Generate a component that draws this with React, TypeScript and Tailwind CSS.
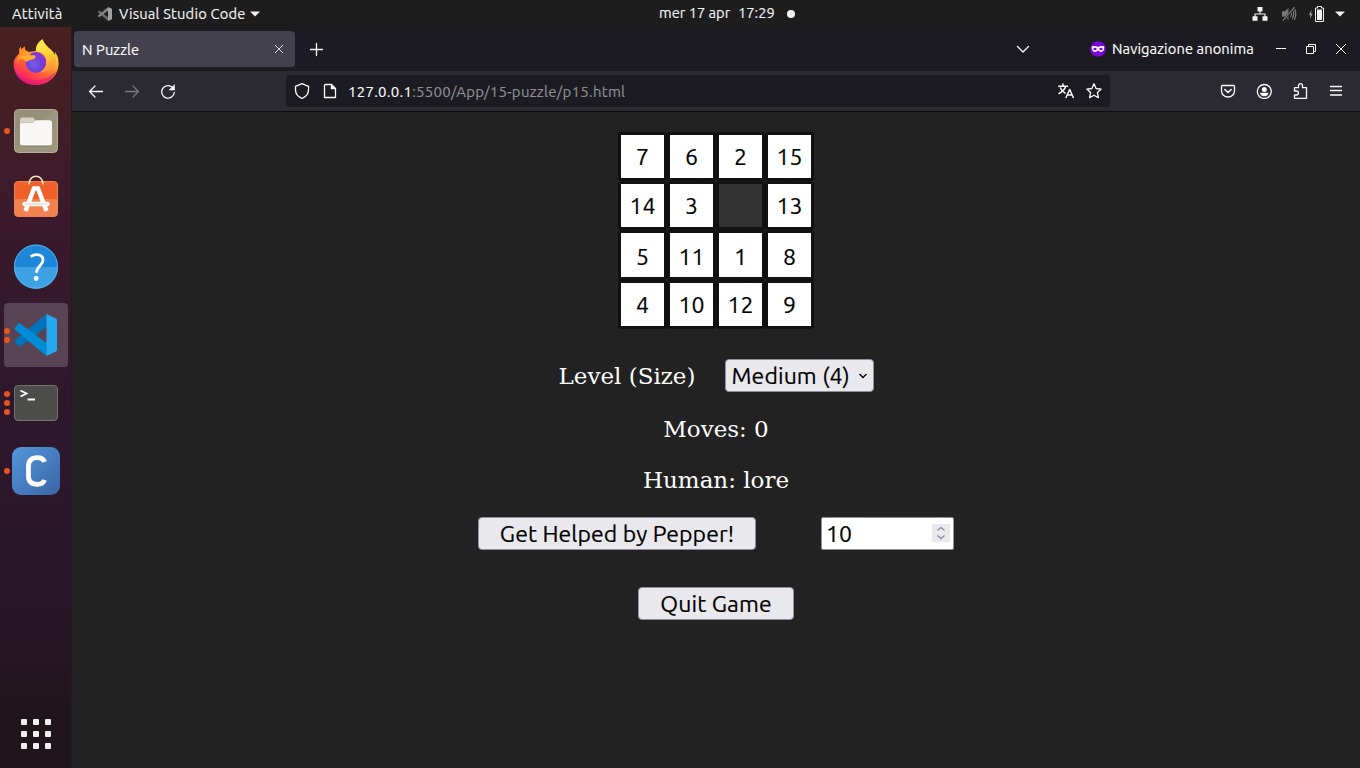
import React from "react";

const tiles: (number | null)[][] = [
  [7, 6, 2, 15],
  [14, 3, null, 13],
  [5, 11, 1, 8],
  [4, 10, 12, 9],
];

const line = {
  fill: "none",
  stroke: "currentColor",
  strokeWidth: 1.3,
  strokeLinecap: "round" as const,
  strokeLinejoin: "round" as const,
};

function Icon({ children, size = 16, className = "" }: { children: React.ReactNode; size?: number; className?: string }) {
  return (
    <svg width={size} height={size} viewBox="0 0 16 16" className={"shrink-0 " + className} {...line}>
      {children}
    </svg>
  );
}

function TopBar() {
  return (
    <header className="relative flex h-[27px] shrink-0 items-center bg-[#1d1d1d] text-[14.67px] text-[#f2f2f2] [-webkit-text-stroke:0.15px]">
      <span className="w-[85px] pl-3 tracking-[0.25px]">Attività</span>
      <svg width="14" height="14" viewBox="0 0 14 14" className="ml-[13px] shrink-0">
        <path d="M0 4.6 1.2 3.6 10.2 10.6V14L0.2 5.6Z" fill="#6c6c6c" />
        <path d="M0 9.2 1.2 10.3 10.2 3.6V0L0.2 8.3Z" fill="#858585" />
        <path d="M10 0 14 1.7V12.3L10 14Z" fill="#a0a0a0" />
      </svg>
      <span className="ml-[7px] w-[126px] whitespace-nowrap tracking-[0.2px]">Visual Studio Code</span>
      <svg width="10" height="6" viewBox="0 0 10 6" className="ml-[5px]">
        <path d="M0 0.5H10L5 5.5Z" fill="#f2f2f2" />
      </svg>
      <div className="ml-[399px] flex items-center whitespace-nowrap">
        <span className="w-[79px] pb-px">mer 17 apr</span>
        <span className="w-[49px] pb-px">17:29</span>
        <span className="size-2 rounded-full bg-[#f2f2f2]" />
      </div>
      <div className="ml-auto flex items-center pr-[15px]">
        <svg width="16" height="14" viewBox="0 0 16 14" className="-mr-[2px] ml-[2px]">
          <path d="M5.5 0h5v4.5h-5zM0.5 9.2h5v4.5h-5zM10.500 9.2h5v4.500h-5z" fill="#f2f2f2" />
          <path d="M8 4v3M3 10V7h10v3" fill="none" stroke="#f2f2f2" strokeWidth="1.1" />
        </svg>
        <svg width="16" height="16" viewBox="0 0 16 16" className="ml-[15px] -mr-px" fill="none" stroke="#777" strokeWidth="1.3">
          <path d="M1 5.2h3L7.5 2v12L4 10.8H1Z" fill="#777" stroke="none" />
          <path d="M9.5 5.2q2 2.8 0 5.6M11.3 3.4q3 4.6 0 9.2M13.3 2.3q3 5.7 0 11.4" />
          <path d="M14 1 2 15" stroke="#1d1d1d" strokeWidth="2.5" />
          <path d="M13.6 1.2 2 14.7" />
        </svg>
        <svg width="16" height="16" viewBox="0 0 16 16" className="ml-[12px]">
          <path d="M3.5 4 1 8.8h1.5L2 13l2.5-5.2H3Z" fill="#aaa" />
          <path d="M9.500 0.5h4V2h2v13.5h-8V2h2Z" fill="none" stroke="#f2f2f2" />
          <path d="M9 3.500h5v10.500H9z" fill="#f2f2f2" />
        </svg>
        <svg width="10" height="6" viewBox="0 0 10 6" className="ml-[11px]">
          <path d="M0 0.5H10L5 5.5Z" fill="#f2f2f2" />
        </svg>
      </div>
    </header>
  );
}

function DockItem({ dots = 0, active = false, children }: { dots?: number; active?: boolean; children: React.ReactNode }) {
  return (
    <div className={"relative flex h-16 w-16 shrink-0 items-center justify-center rounded " + (active ? "bg-[#584454]" : "")}>
      <div className="absolute left-0 flex h-full flex-col items-center justify-center gap-[3px]">
        {Array.from({ length: dots }, (_, i) => (
          <span key={i} className="size-[6px] rounded-full bg-[#e95420]" />
        ))}
      </div>
      {children}
    </div>
  );
}

function Firefox() {
  return (
    <svg width="48" height="48" viewBox="0 1 48 48">
      <defs>
        <linearGradient id="ffBody" x1="0.85" y1="0.1" x2="0.3" y2="1">
          <stop offset="0" stopColor="#fff14a" />
          <stop offset="0.3" stopColor="#ffb82e" />
          <stop offset="0.58" stopColor="#ff6b35" />
          <stop offset="0.82" stopColor="#ff3850" />
          <stop offset="1" stopColor="#e31587" />
        </linearGradient>
        <radialGradient id="ffGlobe" cx="0.4" cy="0.6" r="0.7">
          <stop offset="0" stopColor="#7a5cf0" />
          <stop offset="0.5" stopColor="#6b42d4" />
          <stop offset="1" stopColor="#a52ad2" />
        </radialGradient>
        <linearGradient id="ffHead" x1="0" y1="0" x2="1" y2="0.4">
          <stop offset="0" stopColor="#ff7a22" />
          <stop offset="1" stopColor="#ffb52b" />
        </linearGradient>
        <linearGradient id="ffTail" x1="0" y1="0" x2="0.3" y2="1">
          <stop offset="0" stopColor="#fff44f" />
          <stop offset="0.55" stopColor="#ffd43a" />
          <stop offset="1" stopColor="#ff9833" />
        </linearGradient>
      </defs>
      <path d="M8.7 8.5C7 11 7 13 7.6 15 3.5 18.5 1.6 22 1.6 26 1.8 38 11 47 24 47s22.6-9.5 22.6-22c0-5-1.8-9-4-11.5.5 2 .6 3 .5 4C41 11 33 9 30.5 1.2 26 4 23.5 8.5 24 13l-7 1-4-2V8.5c-1.6.8-2.6 2-3.5 3.5Z" fill="url(#ffBody)" />
      <circle cx="24" cy="24.500" r="10.400" fill="url(#ffGlobe)" />
      <path d="M30.5 1.2c-4.7 3-7 7.6-6.400 11.9 6.200-.2 11 4.400 10.300 11.300-.4 5-3.400 8.700-7 9.800 9 .4 15.600-3.600 16.600-12.400C43 12.5 33.2 10 30.5 1.2Z" fill="url(#ffTail)" />
      <path d="M8.7 8.5c-1.6 2.5-1.4 5-.9 7.1C5 19 4.6 22.2 5.2 25c2-4 5.3-5.6 8.6-4.8 2.7 2.4 6.9 1.7 9.6-.4.7-1.3-.3-2.2-1.5-2.5-3 .3-4.3-.6-5.9-2.5L13 12V8.5c-1.6.8-2.6 2-3.5 3.5Z" fill="url(#ffHead)" />
      <path d="M8 19c3-2 6-1.4 9-.3 2 .7 4 .4 5.7.5.5.8-.2 1.6-1.3 1.9-3 .8-5 1.4-7 3-2.7-3-5-4-8-2.8Z" fill="#ffad2e" />
      <path d="M3 32c4 7 11 10 20 10s16-3 21-9c-3 9-10 14-20 14S5.800 41 3 32Z" fill="#e41678" opacity="0.6" />
    </svg>
  );
}

function Files() {
  return (
    <svg width="48" height="48" viewBox="0 0 48 48">
      <rect x="2.5" y="2.500" width="43" height="43" rx="4" fill="#9d967e" stroke="#b5ae98" />
      <path d="M3 42 42 3H6Q3 3 3 6Z" fill="#8f8871" opacity="0.4" />
      <path d="M8 13q0-2.500 2.500-2.500H20q2 0 2.800 2l.8 1.800V30H8Z" fill="#d8d3c5" />
      <rect x="8.500" y="15" width="31" height="24.500" rx="2.500" fill="#6f6957" opacity="0.7" />
      <path d="M8 18q0-2.500 2.500-2.500H20q1.500 0 2.500-1.300 1-.9 2.500-.9h12.500q2.500 0 2.500 2.500V36q0 2.500-2.500 2.500h-27Q8 38.500 8 36Z" fill="#f8f7f5" />
    </svg>
  );
}

function Software() {
  return (
    <svg width="48" height="48" viewBox="0 0 48 48">
      <rect x="2.500" y="6.500" width="43" height="35" rx="3.500" fill="#f0602a" stroke="#ee8250" />
      <path d="M3 24h42v14q0 3-3 3H6q-3 0-3-3Z" fill="#f28350" />
      <path d="M17 9.500C17-1.500 31-1.500 31 9.500" fill="none" stroke="#ffe3bd" strokeWidth="1.600" />
      <g stroke="#fff" fill="none">
        <path d="m13.500 36 8.500-22.500h4l8.500 22.500" strokeWidth="4.500" />
        <path d="M12.500 29h23" strokeWidth="4.500" strokeLinecap="round" />
        <path d="M13 29h22" stroke="#f7ad89" strokeWidth="0.700" />
      </g>
    </svg>
  );
}

function Help() {
  return (
    <svg width="48" height="48" viewBox="0 0.500 48 48">
      <circle cx="24" cy="24" r="22" fill="#1d86d8" />
      <path d="M2 24.500a22 22 0 0 0 44 0Z" fill="#3da1e3" />
      <circle cx="24" cy="24" r="21.500" fill="none" stroke="#65b7ed" strokeWidth="0.800" />
      <path d="M18.500 14.200c5.500-3.700 12.500-2.200 12.500 3.400 0 5.500-6.500 5.900-6.500 12.600" fill="none" stroke="#fff" strokeWidth="2.800" />
      <circle cx="24.200" cy="36" r="2.400" fill="#fff" />
    </svg>
  );
}

function VSCode() {
  return (
    <svg width="48" height="48" viewBox="0 0 48 48">
      <path d="M3 31.200q-1-.9 0-1.900L34.500 3v13L8 35.500q-.9.700-1.800-.1Z" fill="#0074ba" />
      <path d="M3 16.800q-1 .9 0 1.900L34.500 45V32L8 12.500q-.9-.7-1.800.1Z" fill="#008dd8" />
      <path d="M34.500 3 44 7.500q1 .5 1 1.700v29.600q0 1.200-1 1.700L34.500 45Z" fill="#25a9ef" />
    </svg>
  );
}

function Terminal() {
  return (
    <svg width="48" height="48" viewBox="0 0 48 48">
      <rect x="2.500" y="6.500" width="43" height="35" rx="3.500" fill="#4c4c4a" stroke="#70706d" />
      <path d="m8.500 11.500 6 3-6 3M15.500 20.500h7.500" fill="none" stroke="#fff" strokeWidth="1.800" />
    </svg>
  );
}

function CApp() {
  return (
    <svg width="48" height="48" viewBox="0 0 48 48">
      <defs>
        <linearGradient id="cBlue" x1="0" y1="0" x2="1" y2="1">
          <stop stopColor="#5197da" />
          <stop offset="1" stopColor="#3c64a6" />
        </linearGradient>
      </defs>
      <rect width="48" height="48" rx="9" fill="url(#cBlue)" />
      <path d="M32.500 15q-1.500-4.300-7-4.300-9 0-9 8.300v10q0 8.300 9 8.300 5.500 0 7-4.300" fill="none" stroke="#fff" strokeWidth="4.800" />
    </svg>
  );
}

function Dock() {
  return (
    <aside className="flex w-[72px] shrink-0 flex-col items-center gap-1 border-r border-[#2b1722] bg-[linear-gradient(#48201f_0%,#3b1a2c_25%,#2d172c_55%,#291628_78%,#21151c_92%,#21151c_100%)] pt-1 pb-[2px]">
      <DockItem><Firefox /></DockItem>
      <DockItem dots={1}><Files /></DockItem>
      <DockItem><Software /></DockItem>
      <DockItem><Help /></DockItem>
      <DockItem dots={2} active><VSCode /></DockItem>
      <DockItem dots={3}><Terminal /></DockItem>
      <DockItem dots={1}><CApp /></DockItem>
      <div className="mt-auto flex size-16 items-center justify-center">
        <div className="grid grid-cols-3 gap-[6px]">
          {Array.from({ length: 9 }, (_, i) => (
            <span key={i} className="size-[6px] rounded-[1px] bg-[#f2f0ef]" />
          ))}
        </div>
      </div>
    </aside>
  );
}

function TabStrip() {
  return (
    <div className="flex h-11 shrink-0 items-center bg-[#1c1b22] pl-[2px] text-[14.67px] text-[#fbfbfe] [-webkit-text-stroke:0.15px]">
      <div className="flex h-9 w-[221px] items-center justify-between rounded bg-[#42414d] pr-[11px] pl-2">
        <span className="pt-px tracking-[0.1px]">N Puzzle</span>
        <Icon size={10}><path d="M2 2 14 14M14 2 2 14" /></Icon>
      </div>
      <Icon className="ml-[14px]"><path d="M7.500 2.500v12M1.500 8.500h12" /></Icon>
      <div className="ml-auto flex items-center">
        <Icon className="mr-[59px]"><path d="m2.500 5.500 5.500 5.500 5.500-5.500" /></Icon>
        <svg width="16" height="16" viewBox="0 0 16 16">
          <circle cx="8" cy="8" r="7.800" fill="#7b05d8" />
          <path d="M1.700 5.300q3.800-1 6.300.7 2.500-1.700 6.300-.7.300 5.300-3.300 5.700-1.700 0-3-1.700-1.300 1.700-3 1.700Q1.400 10.600 1.700 5.300Z" fill="#fff" />
          <ellipse cx="5" cy="8" rx="1.700" ry="1.200" fill="#7b05d8" />
          <ellipse cx="11" cy="8" rx="1.700" ry="1.200" fill="#7b05d8" />
        </svg>
        <span className="ml-[6px] w-[142px] whitespace-nowrap tracking-[0.1px]">Navigazione anonima</span>
        <svg width="10" height="10" viewBox="0 0 10 10" className="ml-[22px]" stroke="#fbfbfe"><path d="M0 4.500h10" /></svg>
        <svg width="10" height="10" viewBox="0 0 10 10" className="ml-[20px]" stroke="#fbfbfe" fill="none">
          <path d="M.5 2.500h7v7h-7zM2.500 2.500v-2h7v7h-2" />
        </svg>
        <svg width="10" height="10" viewBox="0 0 10 10" className="mr-[14px] ml-[20px]" stroke="#fbfbfe"><path d="m0 0 10 10M10 0 0 10" /></svg>
      </div>
    </div>
  );
}

function Toolbar() {
  return (
    <div className="flex h-[41px] shrink-0 items-center border-b border-[#0c0c0d] bg-[#2b2a33] text-[#fbfbfe]">
      <Icon className="ml-4"><path d="M14.500 8.500H1.500M7 3 1.500 8.500 7 14" /></Icon>
      <Icon className="ml-5 text-[#77767c]"><path d="M1.500 8.500h13M9 3 14.500 8.500 9 14" /></Icon>
      <Icon className="ml-5">
        <path d="M14.300 9.500A6.300 6.300 0 1 1 12.600 4.500" />
        <path d="M14.500 2V7H9.500Z" fill="currentColor" strokeWidth="0.600" />
      </Icon>
      <div className="ml-[110px] flex h-8 w-[824px] items-center rounded bg-[#1c1b22] px-2">
        <Icon><path d="M8 .7 14.500 3.300V7q0 5.500-6.500 8.500Q1.500 12.500 1.500 7V3.300Z" /></Icon>
        <Icon className="ml-3">
          <path d="M3.500 1.500H9.500L13.500 5.500V14.500H2.500V2.500Q2.500 1.500 3.500 1.500Z" />
          <path d="M9 1.500V6h4.500Z" fill="currentColor" strokeWidth="0.500" />
        </Icon>
        <span className="mt-[2px] ml-[10px] text-[15px] tracking-[0.26px] whitespace-nowrap text-[#8f8f94] [-webkit-text-stroke:0.15px]">
          <span className="text-[#fbfbfe]">127.0.0.1</span>:5500/App/15-puzzle/p15.html
        </span>
        <Icon className="ml-auto">
          <path d="M.7 3.200h8.800M5 1v2M7.700 3.500Q6 8 1 10.500M2.500 5q1.500 3.500 4.500 5M8 14.500 11.700 6.500 15.300 14.500M9.300 12h4.900" strokeWidth="1.500" />
        </Icon>
        <Icon className="ml-3">
          <path d="m8 .8 2.100 4.700 5.100.6-3.800 3.500 1 5.100L8 12.200l-4.400 2.500 1-5.100L.8 6.100l5.100-.6Z" />
        </Icon>
      </div>
      <div className="mr-4 ml-auto flex gap-5">
        <Icon>
          <path d="M2.500 2.500h11q1 0 1 1V8a6.500 6 0 0 1-13 0V3.500q0-1 1-1Z" />
          <path d="m4.800 6.500 3.200 3 3.200-3" strokeWidth="1.500" />
        </Icon>
        <Icon>
          <circle cx="8.300" cy="8.500" r="7" />
          <circle cx="8.300" cy="6.500" r="2.500" fill="currentColor" stroke="none" />
          <path d="M4 9.800h8.600q-.8 3.500-4.300 3.500T4 9.800Z" fill="currentColor" stroke="none" />
        </Icon>
        <Icon>
          <path d="M2.500 8V4.700H6.500V2.700q0-2 2-2t2 2v2h4v10.600H2.500V12h2q1.900 0 1.900-2T4.500 8Z" />
        </Icon>
        <Icon><path d="M2.500 3.500h11M2.500 7.500h11M2.500 12h11" /></Icon>
      </div>
    </div>
  );
}

function Board() {
  return (
    <div className="grid w-[196px] grid-cols-4 grid-rows-[49px_49px_50px_49px] text-[23px] [-webkit-text-stroke:0.2px]">
      {tiles.map((row, r) =>
        row.map((n, c) => (
          <div
            key={`${r}-${c}`}
            className={
              "flex items-center justify-center rounded-[3px] border-3 border-[#111] leading-none text-black " +
              (n === null ? "bg-[#333] " : "bg-white ") +
              (r === 2 ? "pt-[2px]" : "pb-px")
            }
          >
            {n}
          </div>
        ))
      )}
    </div>
  );
}

const control = "flex h-[33px] items-center whitespace-nowrap border border-[#8f8f9d] text-[23px] leading-none text-black [-webkit-text-stroke:0.2px]";

function Game() {
  return (
    <main className="flex flex-1 flex-col items-center bg-[#222] pt-5 text-white">
      <Board />
      <div className="mt-[30px] flex h-[33px] items-center">
        <span className="w-[166px] pt-px font-['DejaVu_Serif',serif] text-[23px] whitespace-nowrap">Level (Size)</span>
        <div className={control + " w-[149px] justify-between rounded-[4px] bg-[#e9e9ed] pr-[6px] pl-[6px] tracking-[0.1px]"}>
          <span>Medium (4)</span>
          <svg width="8" height="6" viewBox="0 0 8 6" fill="none" stroke="#000" strokeWidth="1.300"><path d="M.5 1 4 4.500 7.500 1" /></svg>
        </div>
      </div>
      <p className="mt-[23px] h-7 font-['DejaVu_Serif',serif] text-[23px] leading-7">Moves: 0</p>
      <p className="mt-[23px] h-7 font-['DejaVu_Serif',serif] text-[23px] leading-7">Human: lore</p>
      <div className="mt-[23px] flex gap-[65px]">
        <button className={control + " w-[278px] justify-center rounded-[4px] bg-[#e9e9ed] tracking-[0.1px]"}>Get Helped by Pepper!</button>
        <div className={control + " w-[133px] justify-between rounded-[2px] bg-white pr-[3px] pl-[4px]"}>
          <span>10</span>
          <svg width="18" height="18" viewBox="0 0 18 18" fill="none" stroke="#8f8f9d" strokeWidth="1.500" className="mb-px">
            <path d="M0 0h18v18H0z" fill="#e9e9ed" stroke="none" />
            <path d="m5.500 6.500 3.500-3 3.500 3M5.500 11.500l3.500 3 3.500-3" />
          </svg>
        </div>
      </div>
      <button className={control + " mt-[37px] w-[156px] justify-center rounded-[4px] bg-[#e9e9ed] tracking-[0.1px]"}>Quit Game</button>
    </main>
  );
}

export default function App() {
  return (
    <div className="flex h-[768px] w-[1360px] flex-col overflow-hidden bg-[#222] font-['Ubuntu','Noto_Sans',sans-serif]">
      <TopBar />
      <div className="flex min-h-0 flex-1">
        <Dock />
        <div className="flex min-w-0 flex-1 flex-col">
          <TabStrip />
          <Toolbar />
          <Game />
        </div>
      </div>
    </div>
  );
}
